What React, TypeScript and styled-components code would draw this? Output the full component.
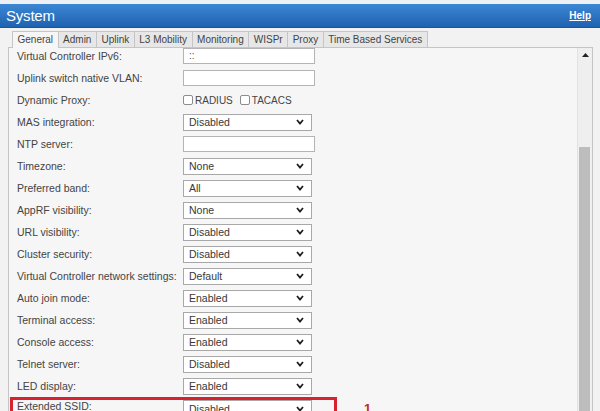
import React from "react"
import styled, { createGlobalStyle } from "styled-components"

type Field =
    | { label: string; kind: "text"; value?: string }
    | { label: string; kind: "select"; value: string }
    | { label: string; kind: "checks"; options: string[] }

const fields: Field[] = [
    { label: "Virtual Controller IPv6:", kind: "text", value: "::" },
    { label: "Uplink switch native VLAN:", kind: "text" },
    { label: "Dynamic Proxy:", kind: "checks", options: ["RADIUS", "TACACS"] },
    { label: "MAS integration:", kind: "select", value: "Disabled" },
    { label: "NTP server:", kind: "text" },
    { label: "Timezone:", kind: "select", value: "None" },
    { label: "Preferred band:", kind: "select", value: "All" },
    { label: "AppRF visibility:", kind: "select", value: "None" },
    { label: "URL visibility:", kind: "select", value: "Disabled" },
    { label: "Cluster security:", kind: "select", value: "Disabled" },
    { label: "Virtual Controller network settings:", kind: "select", value: "Default" },
    { label: "Auto join mode:", kind: "select", value: "Enabled" },
    { label: "Terminal access:", kind: "select", value: "Enabled" },
    { label: "Console access:", kind: "select", value: "Enabled" },
    { label: "Telnet server:", kind: "select", value: "Disabled" },
    { label: "LED display:", kind: "select", value: "Enabled" },
]

const tabs = ["General", "Admin", "Uplink", "L3 Mobility", "Monitoring", "WISPr", "Proxy", "Time Based Services"]

const Chevron = () => (
    <svg width="8" height="6" viewBox="0 0 8 6">
        <polyline points="1,1 4,4.5 7,1" fill="none" stroke="#1e1e1e" strokeWidth="1.8" />
    </svg>
)

const Control: React.FC<{ field: Field }> = ({ field }) => {
    if (field.kind === "select") {
        return (
            <SelectBox>
                <span>{field.value}</span>
                <Chevron />
            </SelectBox>
        )
    }
    if (field.kind === "checks") {
        return (
            <Checks>
                {field.options.map((o) => (
                    <CheckItem key={o}>
                        <Box />
                        {o}
                    </CheckItem>
                ))}
            </Checks>
        )
    }
    return <TextBox>{field.value}</TextBox>
}

const App: React.FC = () => {
    return (
        <Page>
            <GlobalStyle />
            <Header>
                <Title>System</Title>
                <Help href="#">Help</Help>
            </Header>
            <Body>
                <TabBar>
                    {tabs.map((t, i) => (
                        <Tab key={t} $active={i === 0}>{t}</Tab>
                    ))}
                </TabBar>
                <Panel>
                    <Form>
                        <List>
                            {fields.map((f) => (
                                <Row key={f.label}>
                                    <Label>{f.label}</Label>
                                    <Control field={f} />
                                </Row>
                            ))}
                            <HighlightLine>
                                <RedBox>
                                    <Label>Extended SSID:</Label>
                                    <Control field={{ label: "Extended SSID:", kind: "select", value: "Disabled" }} />
                                </RedBox>
                                <Marker>1</Marker>
                            </HighlightLine>
                        </List>
                    </Form>
                    <Scrollbar>
                        <ScrollUp>
                            <svg width="7" height="4" viewBox="0 0 7 4">
                                <polygon points="0,4 3.5,0 7,4" fill="#222" />
                            </svg>
                        </ScrollUp>
                        <Thumb />
                    </Scrollbar>
                </Panel>
            </Body>
        </Page>
    )
}

const GlobalStyle = createGlobalStyle`
    html, body {
        margin: 0;
        padding: 0;
        background: #f2f2f2;
    }
    body {
        font-family: "Liberation Sans", Arial, sans-serif;
    }
`

const Page = styled.div`
    width: 600px;
    height: 411px;
    overflow: hidden;
    display: flex;
    flex-direction: column;
    box-sizing: border-box;
    border-top: 4px solid #edf1f6;
    background: #f2f2f2;
`

const Header = styled.div`
    flex: none;
    height: 24px;
    box-sizing: border-box;
    display: flex;
    align-items: center;
    justify-content: space-between;
    padding: 0 9px 0 6px;
    background: linear-gradient(#3c87d4, #1e62b2);
    border-bottom: 1px solid #1a5599;
`

const Title = styled.div`
    color: #fff;
    font-size: 15px;
    letter-spacing: -0.2px;
`

const Help = styled.a`
    color: #fff;
    font-size: 10px;
    font-weight: bold;
    text-decoration: underline;
`

const Body = styled.div`
    flex: 1;
    min-height: 0;
    display: flex;
    flex-direction: column;
    padding: 3px 7px 0 8px;
`

const TabBar = styled.div`
    display: flex;
    padding-left: 4px;
    flex: none;
`

const Tab = styled.div<{ $active?: boolean }>`
    height: ${(p) => (p.$active ? 17 : 16)}px;
    margin-bottom: ${(p) => (p.$active ? -1 : 0)}px;
    margin-right: -1px;
    box-sizing: border-box;
    padding: 0 4.5px;
    border: 1px solid #c5c5c5;
    border-bottom: none;
    background: ${(p) => (p.$active ? "#f6f6f6" : "#e7e7e7")};
    color: #444;
    font-size: 10px;
    line-height: 15px;
    white-space: nowrap;
    position: relative;
    z-index: ${(p) => (p.$active ? 1 : 0)};
`

const Panel = styled.div`
    flex: 1;
    min-height: 0;
    display: flex;
    border: 1px solid #c5c5c5;
    border-bottom: none;
    background: #f6f6f6;
`

const Form = styled.div`
    flex: 1;
    overflow: hidden;
`

const List = styled.div`
    margin-top: -3px;
`

const Row = styled.div`
    height: 22px;
    display: grid;
    grid-template-columns: 166px auto;
    align-items: center;
    padding-left: 8px;
`

const Label = styled.div`
    font-size: 10.5px;
    color: #444;
    white-space: nowrap;
`

const SelectBox = styled.div`
    width: 129px;
    height: 17px;
    box-sizing: border-box;
    display: flex;
    align-items: center;
    justify-content: space-between;
    padding: 0 7px 0 5px;
    border: 1px solid #a8a8a8;
    background: #fff;
    font-size: 10.5px;
    color: #383838;
`

const TextBox = styled.div`
    width: 132px;
    height: 16px;
    box-sizing: border-box;
    padding-left: 5px;
    border: 1px solid #b4b4b4;
    background: #fff;
    font-size: 10px;
    line-height: 14px;
    color: #555;
`

const Checks = styled.div`
    display: flex;
    gap: 7px;
`

const CheckItem = styled.div`
    display: flex;
    align-items: center;
    gap: 2px;
    font-size: 10px;
    color: #444;
`

const Box = styled.span`
    width: 10px;
    height: 10px;
    box-sizing: border-box;
    border: 1px solid #8c8c8c;
    border-radius: 2px;
    background: #fff;
`

const HighlightLine = styled.div`
    display: flex;
    align-items: flex-start;
`

const RedBox = styled.div`
    width: 327px;
    height: 24px;
    box-sizing: border-box;
    margin-left: 1px;
    border: 3px solid #d6222e;
    display: grid;
    grid-template-columns: 166px auto;
    align-items: start;
    padding-left: 4px;
`

const Marker = styled.div`
    margin-left: 27px;
    padding-top: 4px;
    color: #c4262f;
    font-size: 13px;
    font-weight: bold;
`

const Scrollbar = styled.div`
    flex: none;
    width: 14px;
    display: flex;
    flex-direction: column;
    background: #efefef;
    border-left: 1px solid #e2e2e2;
`

const ScrollUp = styled.div`
    height: 14px;
    display: flex;
    align-items: center;
    justify-content: center;
`

const Thumb = styled.div`
    flex: 1;
    margin: 85px 2px 0 1px;
    background: #bdbdbd;
`

export default App
